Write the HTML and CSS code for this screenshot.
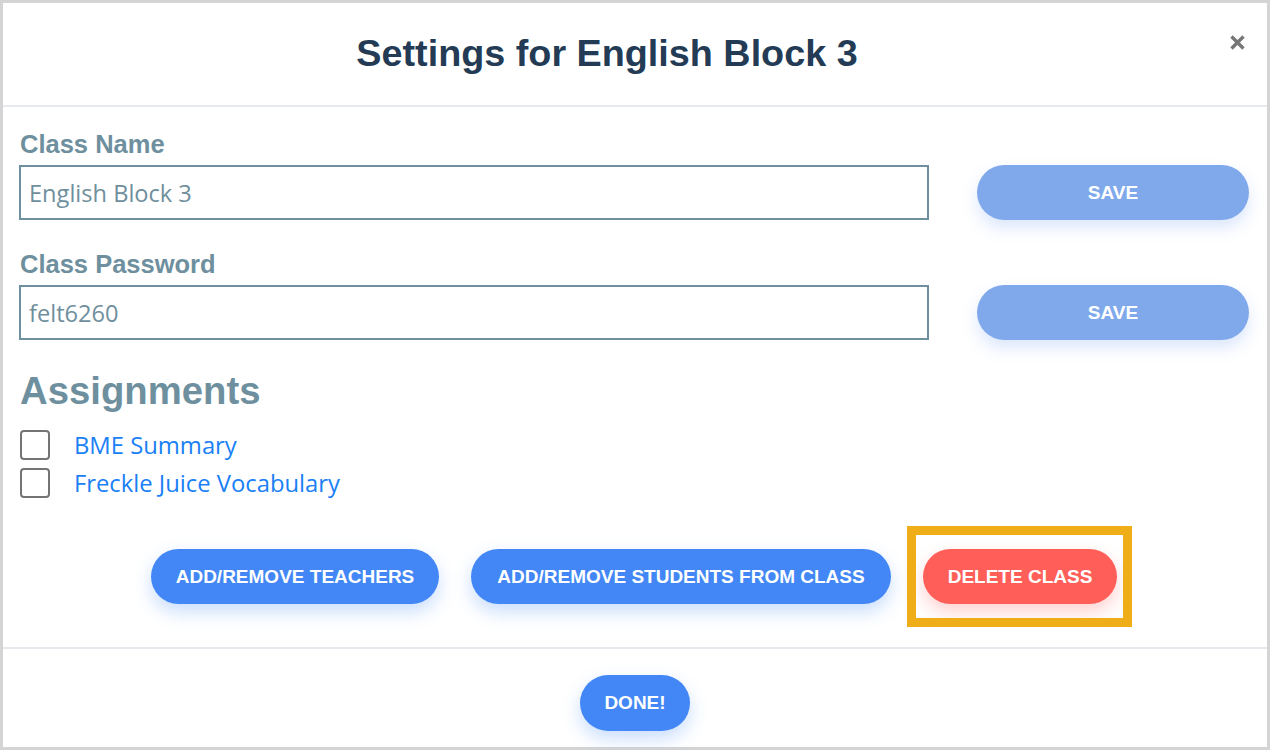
FILE: index.html
```html
<!DOCTYPE html>
<html>
<head>
<meta charset="utf-8">
<link rel="stylesheet" href="styles.css">
</head>
<body>
<div class="modal">
  <header class="modal-header">
    <h1 class="title">Settings for English Block 3</h1>
    <button class="close" aria-label="Close">
      <svg width="17" height="17" viewBox="0 0 17 17"><path d="M2.5 2.5 L14.5 14.5 M14.5 2.5 L2.5 14.5" stroke="#777" stroke-width="3.4" stroke-linecap="butt"/></svg>
    </button>
  </header>
  <main class="modal-body">
    <label class="field-label">Class Name</label>
    <div class="field-row">
      <input class="field-input" type="text" value="English Block 3">
      <button class="btn btn-save">SAVE</button>
    </div>
    <label class="field-label second">Class Password</label>
    <div class="field-row">
      <input class="field-input" type="text" value="felt6260">
      <button class="btn btn-save">SAVE</button>
    </div>
    <h2 class="section-title">Assignments</h2>
    <ul class="assignments">
      <li class="assignment"><span class="checkbox"></span><a class="assignment-link">BME Summary</a></li>
      <li class="assignment"><span class="checkbox"></span><a class="assignment-link">Freckle Juice Vocabulary</a></li>
    </ul>
    <div class="actions">
      <button class="btn btn-primary btn-teachers">ADD/REMOVE TEACHERS</button>
      <button class="btn btn-primary btn-students">ADD/REMOVE STUDENTS FROM CLASS</button>
      <button class="btn btn-danger highlighted">DELETE CLASS</button>
    </div>
  </main>
  <footer class="modal-footer">
    <button class="btn btn-primary btn-done">DONE!</button>
  </footer>
</div>
</body>
</html>
```

FILE: styles.css
```css
* { box-sizing: border-box; }
html, body { margin: 0; padding: 0; background: #fff; }
body { font-family: "Liberation Sans", Arial, sans-serif; }

.modal {
  width: 1270px;
  height: 750px;
  border: 3px solid #d4d4d4;
  background: #fff;
  display: flex;
  flex-direction: column;
}

.modal-header {
  position: relative;
  height: 104px;
  border-bottom: 2px solid #e6e9ed;
  display: flex;
  align-items: center;
  justify-content: center;
  padding-right: 56px;
  flex-shrink: 0;
}

.title {
  margin: 0;
  font-size: 37.75px;
  font-weight: bold;
  color: #243b55;
  line-height: 44px;
  padding-bottom: 2px;
}

.close {
  position: absolute;
  right: 21px;
  top: 31px;
  border: 0;
  background: none;
  padding: 0;
  width: 17px;
  height: 17px;
  display: block;
}
.close svg { display: block; }

.modal-body {
  padding: 22px 18px 43px 16px;
  border-bottom: 2px solid #e6e9ed;
}

.field-label {
  display: block;
  margin-left: 1px;
  font-size: 25.5px;
  line-height: 30px;
  font-weight: bold;
  color: #6e909e;
}
.field-label.second { margin-top: 29px; }

.field-row {
  display: flex;
  align-items: center;
  gap: 48px;
  margin-top: 6px;
}

.field-input {
  width: 910px;
  height: 55px;
  border: 2px solid #6e909e;
  border-radius: 0;
  padding: 0 8px;
  font-family: "Open Sans", sans-serif;
  font-size: 23.6px;
  color: #6f8f9d;
  outline: none;
  background: #fff;
}

.btn {
  border: 0;
  height: 55px;
  border-radius: 28px;
  font-family: "Liberation Sans", Arial, sans-serif;
  font-weight: bold;
  font-size: 19px;
  color: #fff;
  padding: 0 20px;
  cursor: pointer;
  white-space: nowrap;
}

.btn-save {
  width: 272px;
  background: #80a9ec;
  box-shadow: 0 8px 16px rgba(90, 140, 240, 0.22);
}

.btn-primary {
  background: #4287f5;
  box-shadow: 0 8px 18px rgba(66, 135, 245, 0.28);
}

.btn-danger {
  background: #ff5f58;
  box-shadow: 0 8px 18px rgba(255, 95, 88, 0.28);
}

.section-title {
  margin: 29px 0 0 1px;
  font-size: 38.3px;
  line-height: 44px;
  font-weight: bold;
  color: #6e909e;
}

.assignments {
  list-style: none;
  margin: 13px 0 0 1px;
  padding: 0;
}

.assignment {
  display: flex;
  align-items: center;
  height: 38px;
  gap: 24px;
}

.checkbox {
  width: 30px;
  height: 30px;
  border: 2px solid #747474;
  border-radius: 4px;
  flex-shrink: 0;
}

.assignment-link {
  font-family: "Open Sans", sans-serif;
  font-size: 23.8px;
  color: #1a80f6;
  text-decoration: none;
  line-height: 30px;
}

.actions {
  display: flex;
  justify-content: center;
  gap: 32px;
  margin-top: 47px;
}

.btn-teachers { width: 288px; }
.btn-students { width: 420px; }
.highlighted {
  position: relative;
  width: 194px;
}
.highlighted::after {
  content: "";
  position: absolute;
  left: -16px;
  right: -15px;
  top: -23px;
  bottom: -23px;
  border: 9px solid #efae17;
  pointer-events: none;
}

.modal-footer {
  flex: 1;
  display: flex;
  justify-content: center;
  align-items: flex-start;
  padding-top: 26px;
}

.btn-done {
  width: 110px;
  height: 56px;
  padding: 0;
}
```
